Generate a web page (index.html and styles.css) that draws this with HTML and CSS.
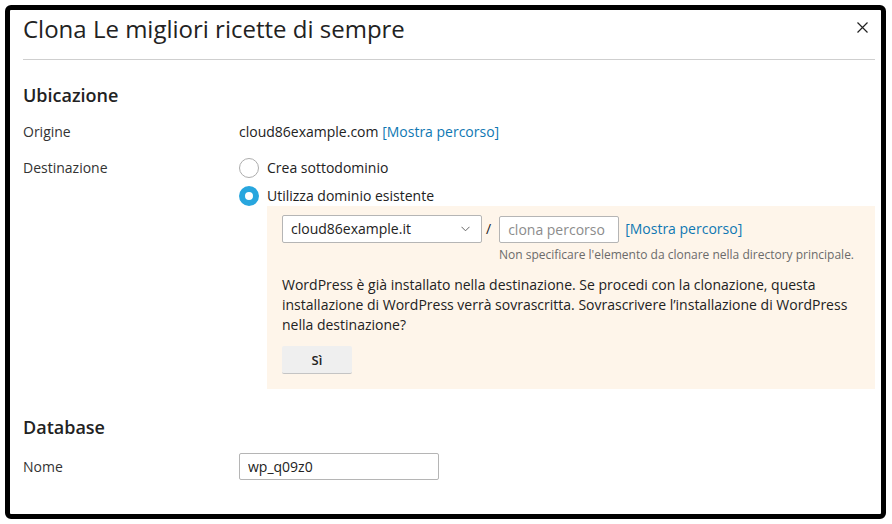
FILE: index.html
```html
<!DOCTYPE html>
<html lang="it">

<head>
    <meta charset="UTF-8">
    <meta name="viewport" content="width=device-width, initial-scale=1.0">
    <title>Clona Le migliori ricette di sempre</title>

    <link rel="stylesheet" href="styles.css">
</head>

<body>
    <div class="dialog">
        <div class="dialog-head">
            <h1 class="dialog-title">Clona Le migliori ricette di sempre</h1>
            <button class="dialog-close" type="button" title="Chiudi">
                <svg width="11" height="11" viewBox="0 0 11 11">
                    <path d="M0.5 0.5 L10.5 10.5 M10.5 0.5 L0.5 10.5" stroke="#222" stroke-width="1.2" fill="none" />
                </svg>
            </button>
        </div>

        <div class="dialog-body">
            <h2 class="section-title">Ubicazione</h2>

            <div class="form-row">
                <div class="form-label">Origine</div>
                <div class="form-field">
                    cloud86example.com <a href="#" class="link">[Mostra percorso]</a>
                </div>
            </div>

            <div class="form-row">
                <div class="form-label">Destinazione</div>
                <div class="form-field">
                    <label class="radio">
                        <span class="radio-mark"></span>
                        Crea sottodominio
                    </label>
                    <label class="radio radio-checked">
                        <span class="radio-mark"></span>
                        Utilizza dominio esistente
                    </label>

                    <div class="target-box">
                        <div class="target-path">
                            <div class="select-style">
                                <span>cloud86example.it</span>
                                <svg width="9" height="6" viewBox="0 0 9 6">
                                    <path d="M0.5 0.8 L4.5 4.8 L8.5 0.8" stroke="#666" stroke-width="1" fill="none" />
                                </svg>
                            </div>
                            <span class="slash">/</span>
                            <input class="input-style input-path" placeholder="clona percorso">
                            <a href="#" class="link">[Mostra percorso]</a>
                        </div>
                        <div class="hint">Non specificare l'elemento da clonare nella directory principale.</div>

                        <p class="warning">WordPress è già installato nella destinazione. Se procedi con la clonazione, questa installazione di WordPress verrà sovrascritta. Sovrascrivere l’installazione di WordPress nella destinazione?</p>
                        <button class="btn" type="button">Sì</button>
                    </div>
                </div>
            </div>

            <h2 class="section-title section-db">Database</h2>

            <div class="form-row form-row-input">
                <div class="form-label">Nome</div>
                <div class="form-field">
                    <input class="input-style input-db" value="wp_q09z0">
                </div>
            </div>
        </div>
    </div>
</body>

</html>
```

FILE: styles.css
```css
:root {
    --text-color: #222;
    --link-color: #0f78b3;
    --border-color: #b5b5b5;
    --box-color: #fef5ea;
}

* {
    margin: 0;
    padding: 0;
    box-sizing: border-box;
}

body {
    background-color: #fff;
    font-family: "Open Sans", "Liberation Sans", sans-serif;
    font-size: 14px;
    line-height: 20px;
    color: var(--text-color);
}

.dialog {
    width: 881px;
    height: 514px;
    margin: 5px;
    border: 5px solid #000;
    border-radius: 6px;
    padding: 0 6px 0 13px;
    background-color: #fff;
}

.dialog-head {
    display: flex;
    justify-content: space-between;
    align-items: flex-start;
    padding: 4px 0 16px;
    border-bottom: 1px solid #cfcfcf;
}

.dialog-title {
    font-size: 24px;
    font-weight: 400;
    line-height: 29px;
}

.dialog-close {
    border: 0;
    background: none;
    width: 11px;
    height: 11px;
    margin: 8px 7px 0 0;
    line-height: 0;
}

.section-title {
    font-size: 18px;
    font-weight: 600;
    line-height: 24px;
    margin-top: 23px;
    margin-bottom: 15px;
}

.section-db {
    margin-top: 26px;
    margin-bottom: 14px;
}

.form-row {
    display: flex;
    margin-bottom: 16px;
}

.form-label {
    width: 216px;
    flex-shrink: 0;
    color: #333;
}

.form-field {
    flex: 1;
}

.form-row-input {
    align-items: center;
}

.link {
    color: var(--link-color);
    text-decoration: none;
}

.radio {
    display: flex;
    align-items: center;
    gap: 8px;
    height: 20px;
}

.radio + .radio {
    margin-top: 8px;
}

.radio-mark {
    width: 20px;
    height: 20px;
    border-radius: 50%;
    border: 1px solid #adadad;
    background-color: #fff;
}

.radio-checked .radio-mark {
    border: 6px solid #28a6de;
}

.target-box {
    margin-left: 28px;
    padding: 9px 15px 15px;
    background-color: var(--box-color);
}

.target-path {
    display: flex;
    align-items: center;
}

.select-style {
    display: flex;
    justify-content: space-between;
    align-items: center;
    width: 200px;
    height: 28px;
    padding: 0 11px 0 8px;
    border: 1px solid var(--border-color);
    border-radius: 2px;
    background-color: #fff;
}

.slash {
    margin: 0 8px 0 4px;
}

.input-style {
    height: 27px;
    padding: 0 8px;
    border: 1px solid var(--border-color);
    border-radius: 2px;
    background-color: #fff;
    font-family: inherit;
    font-size: 14px;
    color: var(--text-color);
}

.input-style::placeholder {
    color: #8c8c8c;
}

.input-path {
    width: 120px;
    margin-right: 6px;
}

.input-db {
    width: 200px;
}

.hint {
    margin: 4px 0 0 217px;
    font-size: 12px;
    line-height: 16px;
    color: #6b6b6b;
}

.warning {
    margin-top: 12px;
}

.btn {
    display: block;
    width: 70px;
    height: 28px;
    margin-top: 11px;
    border: 0;
    border-bottom: 1px solid #c4c4c4;
    border-radius: 2px;
    background-color: #efefef;
    font-family: inherit;
    font-size: 13px;
    font-weight: 600;
    color: var(--text-color);
}
```
